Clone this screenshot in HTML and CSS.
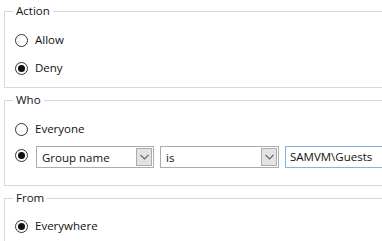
FILE: index.html
```html
<!DOCTYPE html>
<html>
<head>
<meta charset="utf-8">
<link rel="stylesheet" href="styles.css">
</head>
<body>
<div class="page">
  <fieldset class="group group-action">
    <legend class="group-title">Action</legend>
    <label class="radio-row first">
      <span class="radio"></span><span class="radio-label">Allow</span>
    </label>
    <label class="radio-row">
      <span class="radio checked"></span><span class="radio-label">Deny</span>
    </label>
  </fieldset>

  <fieldset class="group group-who">
    <legend class="group-title">Who</legend>
    <label class="radio-row first">
      <span class="radio"></span><span class="radio-label">Everyone</span>
    </label>
    <div class="control-row">
      <span class="radio checked"></span>
      <div class="combo combo-group">
        <span class="combo-text">Group name</span>
        <span class="combo-btn"><svg width="9" height="6" viewBox="0 0 9 6"><path d="M0.5 0.8 L4.5 4.8 L8.5 0.8" fill="none" stroke="#606060" stroke-width="1.2"/></svg></span>
      </div>
      <div class="combo combo-op">
        <span class="combo-text">is</span>
        <span class="combo-btn"><svg width="9" height="6" viewBox="0 0 9 6"><path d="M0.5 0.8 L4.5 4.8 L8.5 0.8" fill="none" stroke="#606060" stroke-width="1.2"/></svg></span>
      </div>
      <div class="textbox">SAMVM\Guests</div>
    </div>
  </fieldset>

  <fieldset class="group group-from">
    <legend class="group-title">From</legend>
    <label class="radio-row first">
      <span class="radio checked"></span><span class="radio-label">Everywhere</span>
    </label>
  </fieldset>
</div>
</body>
</html>
```

FILE: styles.css
```css
html, body {
  margin: 0;
  padding: 0;
  background: #ffffff;
  overflow: hidden;
}

body {
  font-family: "Open Sans", "Noto Sans", sans-serif;
  font-size: 11.5px;
  color: #111111;
  width: 382px;
  height: 241px;
}

.page {
  padding: 3px 0 0 4px;
  width: 420px;
  display: flex;
  flex-direction: column;
  gap: 4px;
}

.group {
  margin: 0;
  border: 1px solid #d5d9dc;
  padding: 0 0 0 10px;
  min-width: 0;
}

.group-title {
  margin-left: -2px;
  padding: 0 3px;
  line-height: 16px;
  height: 16px;
  color: #111111;
}

.group-action { padding-bottom: 11px; }
.group-who { padding-bottom: 17px; }
.group-from { padding-bottom: 20px; }

.radio-row {
  display: flex;
  align-items: center;
  gap: 7px;
  height: 16px;
  margin-top: 12px;
}

.radio-row.first { margin-top: 13px; }

.group-from .radio-row.first { margin-top: 12px; }

.radio {
  box-sizing: border-box;
  width: 13px;
  height: 13px;
  border: 1px solid #333333;
  border-radius: 50%;
  background: #ffffff;
  display: flex;
  align-items: center;
  justify-content: center;
  flex: none;
}

.radio.checked::after {
  content: "";
  width: 7px;
  height: 7px;
  border-radius: 50%;
  background: #111111;
}

.radio-label {
  line-height: 16px;
}

.control-row {
  display: flex;
  align-items: center;
  height: 22px;
  margin-top: 9px;
}

.control-row .radio {
  margin-right: 8px;
  margin-top: -3px;
}

.combo {
  box-sizing: border-box;
  height: 22px;
  border: 1px solid #acacac;
  background: #ffffff;
  display: flex;
  align-items: center;
  justify-content: space-between;
  padding: 0 1px 0 5px;
  margin-right: 6px;
}

.combo-group { width: 118px; }
.combo-op { width: 119px; }

.combo-btn {
  box-sizing: border-box;
  width: 16px;
  height: 18px;
  border: 1px solid #acacac;
  background: #e3e3e3;
  display: flex;
  align-items: center;
  justify-content: center;
}

.textbox {
  box-sizing: border-box;
  height: 22px;
  width: 120px;
  border: 1px solid #7eb4ea;
  padding: 0 4px;
  line-height: 20px;
  flex: none;
}
```
